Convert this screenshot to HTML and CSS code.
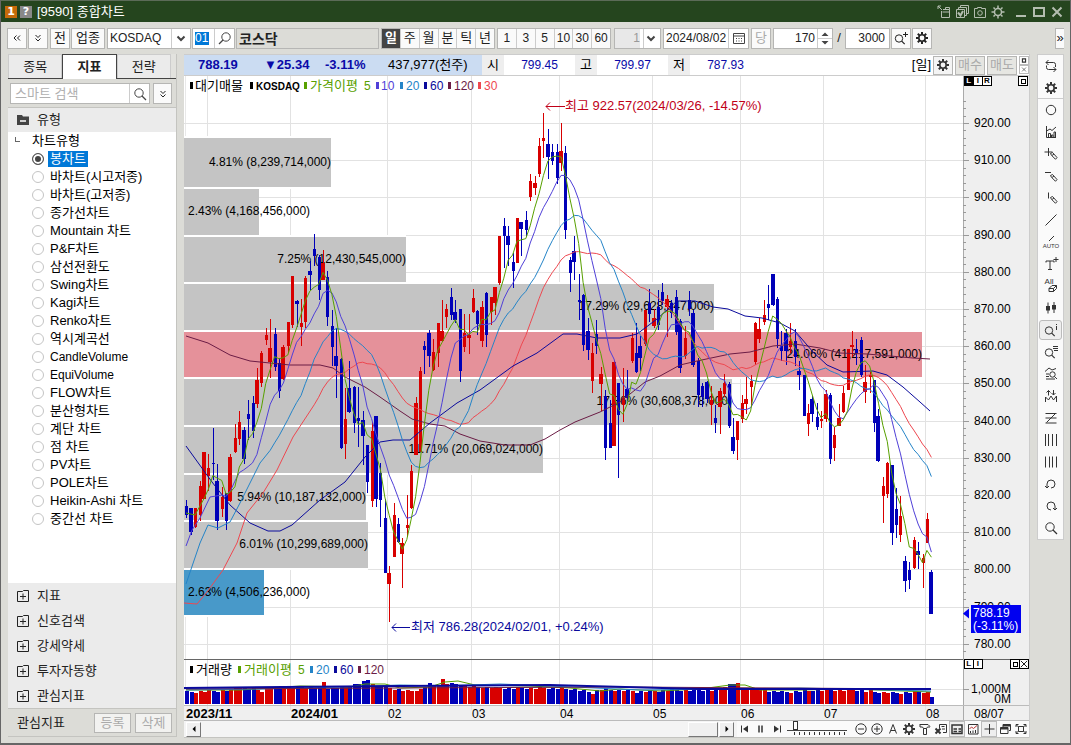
FILE: index.html
```html
<!DOCTYPE html>
<html lang="ko">
<head>
<meta charset="utf-8">
<title>[9590] 종합차트</title>
<link rel="stylesheet" href="styles.css">
</head>
<body>
<svg class="defs" aria-hidden="true">
  <symbol id="gear" viewBox="0 0 16 16"><circle cx="8" cy="8" r="3.2" fill="none" stroke="currentColor" stroke-width="1.600"/><path d="M8 2v2.500M8 11.500v2.500M2 8h2.500M11.500 8H14M3.800 3.800l1.600 1.600M10.600 10.600l1.600 1.600M12.200 3.800l-1.600 1.600M5.400 10.600l-1.600 1.600" fill="none" stroke="currentColor" stroke-width="2"/></symbol>
  <symbol id="lens" viewBox="0 0 16 16"><circle cx="7" cy="7" r="4.200" fill="none" stroke="currentColor"/><path d="M10 10l4 4" stroke="currentColor" stroke-width="1.300"/></symbol>
  <symbol id="chev" viewBox="0 0 16 16"><path d="M4.500 6.500L8 10l3.500-3.500" fill="none" stroke="currentColor" stroke-width="2"/></symbol>
  <symbol id="dbl" viewBox="0 0 16 16"><path d="M5.500 5L8 7.500 10.500 5M5.500 8.500L8 11l2.500-2.500" fill="none" stroke="currentColor"/></symbol>
  <symbol id="dblleft" viewBox="0 0 16 16"><path d="M7.500 5.500L5 8l2.500 2.500M11 5.500L8.500 8l2.500 2.500" fill="none" stroke="currentColor"/></symbol>
  <symbol id="plusbox" viewBox="0 0 16 16"><path d="M2.500 3.500h5l1 -1h5v11h-11z M8 5.500v6M5 8.500h6" fill="none" stroke="currentColor"/></symbol>
  <symbol id="pencil" viewBox="0 0 16 16"><path d="M7.500 7.500l2-1 4.500 5-1.500 1.800-4-4zM9 9.500l2-1.500" fill="none" stroke="currentColor"/></symbol>
  <symbol id="mag" viewBox="0 0 16 16"><circle cx="6" cy="8.500" r="3.700" fill="none" stroke="currentColor"/><path d="M8.700 11.200l3 3" stroke="currentColor" stroke-width="1.200"/></symbol>
</svg>
<div class="app">
  <header class="titlebar">
    <span class="badge one">1</span><span class="badge help">?</span>
    <h1>[9590] 종합차트</h1>
    <div class="wintools">
      <button aria-label="분리"><svg viewBox="0 0 16 16"><path d="M5.500 7v6.500h8V5.500H7M13.500 8h-7M9.500 5.500v-2h4v2M2 2l4 4M2 5V2h3" fill="none" stroke="currentColor"/></svg></button>
      <button aria-label="복사"><svg viewBox="0 0 16 16"><path d="M2.500 5.500h8v8h-8zM4.500 5V3.500h8v8H11M6.500 3V1.500h8v8H13" fill="none" stroke="currentColor"/><path d="M4 8.500l2.500 3L9 7" fill="none" stroke="currentColor" stroke-width="2"/></svg></button>
      <button aria-label="캡처"><svg viewBox="0 0 16 16"><path d="M2.500 4.500h3v-1h4v1h4v9h-11z" fill="none" stroke="currentColor"/><circle cx="8" cy="9" r="2.300" fill="none" stroke="currentColor"/></svg></button>
      <button aria-label="설정"><svg viewBox="0 0 16 16"><circle cx="8" cy="8" r="3.500" fill="none" stroke="currentColor" stroke-width="1.500"/><path d="M8 1.500V4M8 12v2.500M1.500 8H4M12 8h2.500M3.500 3.500L5 5M11 11l1.500 1.500M12.500 3.500L11 5M5 11l-1.500 1.500" stroke="currentColor" stroke-width="1.500"/></svg></button>
      <button aria-label="최소화"><svg viewBox="0 0 16 16"><path d="M3 12h10" stroke="currentColor" stroke-width="2"/></svg></button>
      <button aria-label="최대화"><svg viewBox="0 0 16 16"><path d="M3 4h10v8H3z" fill="none" stroke="currentColor" stroke-width="2"/></svg></button>
      <button aria-label="닫기"><svg viewBox="0 0 16 16"><path d="M3.500 3.500l9 9M12.500 3.500l-9 9" stroke="currentColor" stroke-width="2"/></svg></button>
    </div>
  </header>

  <div class="toolbar">
    <button class="tb" aria-label="이전"><svg><use href="#dblleft"/></svg></button>
    <button class="tb" aria-label="펼치기"><svg><use href="#dbl"/></svg></button>
    <button class="tb sep">전</button>
    <button class="tb sector">업종</button>
    <div class="combo market"><select aria-label="시장"><option>KOSDAQ</option></select><svg><use href="#chev"/></svg></div>
    <div class="field code"><input aria-label="코드" value="01"><button aria-label="찾기"><svg class="flip"><use href="#lens"/></svg></button></div>
    <div class="stockname">코스닥</div>
    <div class="seg sep"><button class="on">일</button><button>주</button><button>월</button><button>분</button><button>틱</button><button>년</button></div>
    <div class="seg"><button>1</button><button>3</button><button>5</button><button>10</button><button>30</button><button>60</button></div>
    <div class="combo unit sep"><select aria-label="주기" disabled><option>1</option></select><svg><use href="#chev"/></svg></div>
    <div class="field date"><input aria-label="날짜" value="2024/08/02"><button aria-label="달력"><svg viewBox="0 0 16 16"><path d="M2.500 3.500h11v10h-11zM2.500 6h11" fill="none" stroke="currentColor"/><path d="M5 8.500h7M5 11h7" stroke="currentColor" stroke-dasharray="1 1.500"/></svg></button></div>
    <button class="tb off sep">당</button>
    <div class="field count"><input aria-label="표시 개수" value="170"><button aria-label="증감"><svg viewBox="0 0 14 18"><path d="M3.500 7L7 3.500 10.500 7zM3.500 12L7 15.500l3.500-3.500z" fill="currentColor"/><path d="M0 9.500h14" stroke="#ccc"/></svg></button></div>
    <span class="slash">/</span>
    <div class="field total"><input aria-label="전체 개수" value="3000"></div>
    <button class="tb" aria-label="추가 조회"><svg viewBox="0 0 16 16"><use href="#mag"/><path d="M12.500 2v5M10 4.500h5" stroke="currentColor"/></svg></button>
    <button class="tb" aria-label="설정"><svg><use href="#gear"/></svg></button>
    <button class="tb more">»</button>
  </div>

  <main class="content">
    <aside class="side">
      <div class="tabs"><button>종목</button><button class="on">지표</button><button>전략</button></div>
      <div class="search"><div class="field"><input aria-label="검색" placeholder="스마트 검색"><button aria-label="검색"><svg><use href="#lens"/></svg></button></div><button class="tb" aria-label="펼치기"><svg><use href="#dbl"/></svg></button></div>
      <h2 class="group"><svg viewBox="0 0 16 16"><path d="M2 3h5l1 1.500h6V13H2z" fill="#444"/><path d="M5 9h6" stroke="#fff" stroke-width="1.500"/></svg>유형</h2>
      <div class="tree">
        <div class="root"><i></i>차트유형</div>
        <label><input type="radio" name="t" checked><span>봉차트</span></label>
        <label><input type="radio" name="t"><span>바차트(시고저종)</span></label>
        <label><input type="radio" name="t"><span>바차트(고저종)</span></label>
        <label><input type="radio" name="t"><span>종가선차트</span></label>
        <label><input type="radio" name="t"><span>Mountain 차트</span></label>
        <label><input type="radio" name="t"><span>P&amp;F차트</span></label>
        <label><input type="radio" name="t"><span>삼선전환도</span></label>
        <label><input type="radio" name="t"><span>Swing차트</span></label>
        <label><input type="radio" name="t"><span>Kagi차트</span></label>
        <label><input type="radio" name="t"><span>Renko차트</span></label>
        <label><input type="radio" name="t"><span>역시계곡선</span></label>
        <label class="latin"><input type="radio" name="t"><span>CandleVolume</span></label>
        <label class="latin"><input type="radio" name="t"><span>EquiVolume</span></label>
        <label><input type="radio" name="t"><span>FLOW차트</span></label>
        <label><input type="radio" name="t"><span>분산형차트</span></label>
        <label><input type="radio" name="t"><span>계단 차트</span></label>
        <label><input type="radio" name="t"><span>점 차트</span></label>
        <label><input type="radio" name="t"><span>PV차트</span></label>
        <label><input type="radio" name="t"><span>POLE차트</span></label>
        <label><input type="radio" name="t"><span>Heikin-Ashi 차트</span></label>
        <label><input type="radio" name="t"><span>중간선 차트</span></label>
      </div>
      <div class="cats">
        <button><svg><use href="#plusbox"/></svg>지표</button>
        <button><svg><use href="#plusbox"/></svg>신호검색</button>
        <button><svg><use href="#plusbox"/></svg>강세약세</button>
        <button><svg><use href="#plusbox"/></svg>투자자동향</button>
        <button><svg><use href="#plusbox"/></svg>관심지표</button>
      </div>
      <div class="sidefoot"><span>관심지표</span><button disabled>등록</button><button disabled>삭제</button></div>
    </aside>

    <section class="chart">
      <div class="quote">
        <div class="now"><b class="p">788.19</b><b class="d">▼25.34</b><b class="r">-3.11%</b><span>437,977(천주)</span></div>
        <span class="k">시</span><span class="v">799.45</span><span class="k">고</span><span class="v">799.97</span><span class="k">저</span><span class="v">787.93</span>
        <div class="acts"><span>[일]</span><button aria-label="설정"><svg><use href="#gear"/></svg></button><button class="w" disabled>매수</button><button class="w" disabled>매도</button>
        <div class="mini"><button aria-label="창"><svg viewBox="0 0 10 9"><path d="M3 2.500h4v4H3z" fill="none" stroke="#333" stroke-width="1.500"/></svg></button><button aria-label="닫기"><svg viewBox="0 0 10 9"><path d="M2.500 2l5 5M7.500 2l-5 5" stroke="#555"/></svg></button></div></div>
      </div>
      <div class="pane">
        <svg id="plot" viewBox="184 76 845 645" preserveAspectRatio="xMinYMin meet" role="img"></svg>
        <div class="marks top"><button class="inv">L</button><button>I</button><button>R</button></div>
        <div class="marks topend"><button aria-label="확대"><i></i></button></div>
        <div class="marks low"><button>L</button><button>I</button></div>
        <div class="marks lowend"><button aria-label="확대"><i></i></button><button aria-label="닫기"><svg viewBox="0 0 9 9"><path d="M1 1l7 7M8 1L1 8" stroke="#000"/></svg></button></div>
      </div>
      <div class="foot">
        <div class="scroll"><button aria-label="왼쪽"><svg viewBox="0 0 12 12"><path d="M7.500 3v6l-3-3z"/></svg></button><span class="thumb"></span><button aria-label="오른쪽"><svg viewBox="0 0 12 12"><path d="M4.500 3v6l3-3z"/></svg></button></div>
        <button class="ic" aria-label="처음"><svg viewBox="0 0 16 16"><path d="M4.500 4.500v7" stroke="currentColor"/><path d="M11 4.500v7L6 8z" fill="currentColor"/></svg></button>
        <button class="ic" aria-label="정지"><svg viewBox="0 0 16 16"><path d="M6 4.500v7M9 4.500v7" stroke="currentColor" stroke-width="1.500"/></svg></button>
        <button class="ic" aria-label="끝"><svg viewBox="0 0 16 16"><path d="M11.500 4.500v7" stroke="currentColor"/><path d="M5 4.500v7L10 8z" fill="currentColor"/></svg></button>
        <label class="speed"><input type="range" min="0" max="10" value="1" aria-label="속도"></label>
        <button class="ic" aria-label="축소"><svg viewBox="0 0 16 16"><circle cx="8" cy="8" r="5.200" fill="none" stroke="currentColor"/><path d="M5 8h6" stroke="currentColor"/></svg></button>
        <button class="ic" aria-label="확대"><svg viewBox="0 0 16 16"><circle cx="8" cy="8" r="5.200" fill="none" stroke="currentColor"/><path d="M5 8h6M8 5v6" stroke="currentColor"/></svg></button>
        <button class="ic" aria-label="글꼴"><svg viewBox="0 0 16 16"><path d="M4.500 12.500L8 3.500l3.500 9M6 9.500h4" fill="none" stroke="currentColor"/></svg></button>
        <button class="ic" aria-label="설정"><svg><use href="#gear"/></svg></button>
        <button class="ic" aria-label="도구"><svg viewBox="0 0 16 16"><path d="M3 3.500h8l2 2M3 3v3h2.500l1 1.500h3l1-1.500H13M6.500 7.500v6h3v-6" fill="none" stroke="currentColor"/></svg></button>
        <button class="ic" aria-label="내보내기"><svg viewBox="0 0 16 16"><path d="M6.500 7V3.500h7v8H10M8.500 5.500h3M9 8h3" fill="none" stroke="currentColor"/><path d="M2.500 7.500l5 5M7.500 7.500l-5 5" stroke="currentColor" stroke-width="2"/></svg></button>
        <button class="ic on" aria-label="표"><svg viewBox="0 0 16 16"><path d="M3 4h10v8.500H3z" fill="none" stroke="currentColor" stroke-width="1.500"/><path d="M4.500 8H8M4.500 10.500H8M9.500 8H12M9.500 10.500H12" stroke="currentColor" stroke-width="1.500"/></svg></button>
        <button class="ic" aria-label="차트"><svg viewBox="0 0 16 16"><path d="M3.500 3.500h9.500v9.500H3.500z" fill="none" stroke="currentColor"/><path d="M4.500 8l2-2 2 1.500L12 4.500" fill="none" stroke="#b33"/><path d="M5.500 12v-2M8 12V9.500M10.500 12V9" stroke="currentColor"/></svg></button>
        <button class="ic on" aria-label="십자선"><svg viewBox="0 0 16 16"><path d="M8.500 3v10M3.500 8h10" stroke="currentColor"/></svg></button>
        <button class="ic" aria-label="창"><svg viewBox="0 0 16 16"><path d="M3.500 6.500h7.500v6H3.500zM6 6V3.500h7.500v6H12" fill="none" stroke="currentColor"/><path d="M3.500 7.500H11M6 4.500h7.500" stroke="currentColor" stroke-width="2"/></svg></button>
        <button class="ic" aria-label="전체화면"><svg viewBox="0 0 16 16"><path d="M5.500 5.500h5v5h-5zM3 6V3.500h2.500M10.500 3.500H13V6M13 10v2.500h-2.500M5.500 12.500H3V10M3.500 4l2 2M12.500 4l-2 2M3.500 12l2-2M12.500 12l-2-2" fill="none" stroke="currentColor"/></svg></button>
      </div>
    </section>

    <nav class="rail">
      <button aria-label="새로고침"><svg viewBox="0 0 16 16"><path d="M5.500 2L3 4.500h7.500q2 0 2 2V9M3 4.500L5.500 7M3.500 7.500v2q0 2 2 2H13M10.500 9l2.500 2.500-2.500 2.500" fill="none" stroke="currentColor"/></svg></button>
      <button class="line" aria-label="설정"><svg><use href="#gear"/></svg></button>
      <button aria-label="원"><svg viewBox="0 0 16 16"><circle cx="8" cy="8" r="4.700" fill="none" stroke="currentColor"/></svg></button>
      <button aria-label="지표"><svg viewBox="0 0 16 16"><path d="M3.500 2v11.500H13M3.500 7l3.500-2 2 1.500L13 3M5.500 13V9.500h2V13M8.500 13v-2h1.500v2M11 13V8h1.500v5" fill="none" stroke="currentColor"/></svg></button>
      <button aria-label="십자 그리기"><svg viewBox="0 0 16 16"><path d="M5.500 2v8M1.500 6h8" stroke="currentColor"/><use href="#pencil"/></svg></button>
      <button aria-label="수평선"><svg viewBox="0 0 16 16"><path d="M2 4.500h6" stroke="currentColor"/><use href="#pencil"/></svg></button>
      <button aria-label="수직선"><svg viewBox="0 0 16 16"><path d="M5.500 2.500v6" stroke="currentColor"/><use href="#pencil"/></svg></button>
      <button aria-label="추세선"><svg viewBox="0 0 16 16"><path d="M2.500 13.500l11-11" stroke="currentColor"/></svg></button>
      <button aria-label="자동 추세선"><svg viewBox="0 0 16 16"><path d="M6 7l5-5" stroke="currentColor"/><text x="8" y="14" class="auto">AUTO</text></svg></button>
      <button aria-label="문자"><svg viewBox="0 0 16 16"><path d="M3 6.500V5h8v1.500M7 5v8M5 13.500h4M13 1v5M10.500 3.500h5" fill="none" stroke="currentColor"/></svg></button>
      <button aria-label="전체 지우기"><svg viewBox="0 0 16 16"><text x="6" y="6" class="auto all">All</text><path d="M6 10.500l3-3h4.500v3l-3 3H6zM6 10.500h4.500v3M10.500 10.500l3-3" fill="none" stroke="currentColor"/></svg></button>
      <button aria-label="봉"><svg viewBox="0 0 16 16"><path d="M5 2.500v11M11 2v11" stroke="currentColor"/><path d="M3 6h4v4.500H3zM9 5h4v4.500H9z" fill="currentColor"/></svg></button>
      <button class="on" aria-label="정보 조회"><svg viewBox="0 0 16 16"><use href="#mag"/><path d="M13.500 2v1M13.500 4v4" stroke="currentColor"/></svg></button>
      <button aria-label="목록 조회"><svg viewBox="0 0 16 16"><use href="#mag"/><path d="M10 2.500h5M10 4.500h5M11 6.500h4" stroke="currentColor"/></svg></button>
      <button aria-label="차트 조회"><svg viewBox="0 0 16 16"><path d="M2 5.500l4-3.500 3 2 4-1.500M3 8h3M3 10.500h3M3 13h9" fill="none" stroke="currentColor"/><circle cx="9.500" cy="8.500" r="2.700" fill="none" stroke="currentColor"/><path d="M11.500 10.500l2.500 2.500" stroke="currentColor"/></svg></button>
      <button aria-label="파동"><svg viewBox="0 0 16 16"><path d="M2.500 14V9l3 3 2.500-4 2.500 4 3-4v6M5.500 7.500V2.500M3.500 4.500l2-2 2 2M10.500 2v5M8.500 5l2 2 2-2" fill="none" stroke="currentColor"/></svg></button>
      <button aria-label="채널"><svg viewBox="0 0 16 16"><path d="M2.500 3.500h11M2.500 8h11M2.500 13h11M3.500 12.500l9-9" stroke="currentColor"/></svg></button>
      <button aria-label="시간대"><svg viewBox="0 0 16 16"><path d="M2.500 2v12M5.500 2v12M9.500 2v12M13.500 2v12" stroke="currentColor"/></svg></button>
      <button aria-label="주기선"><svg viewBox="0 0 16 16"><path d="M2.500 2.500v11M6.500 2.500v11M9.500 2.500v11M13.500 2.500v11" stroke="currentColor"/></svg></button>
      <button aria-label="되돌리기"><svg viewBox="0 0 16 16"><path d="M8 12a4 4 0 1 0-4-4v4M2 10l2 2 2-2" fill="none" stroke="currentColor"/></svg></button>
      <button aria-label="다시하기"><svg viewBox="0 0 16 16"><path d="M8 12a4 4 0 1 1 4-4v4M10 10l2 2 2-2" fill="none" stroke="currentColor"/></svg></button>
      <button aria-label="돋보기"><svg><use href="#lens"/></svg></button>
    </nav>
  </main>
</div>
<script src="chart.js"></script>
</body>
</html>
```

FILE: styles.css
```css
* { box-sizing: border-box; }
body { margin: 0; font: 13px/16px "Liberation Sans", "Noto Sans CJK KR", sans-serif; color: #222; }
button, input, select { font: inherit; color: inherit; margin: 0; padding: 0; border: 0; background: none; border-radius: 0; }
svg { display: block; width: 16px; height: 16px; flex: none; }
.defs { position: absolute; width: 0; height: 0; }
.app { display: flex; flex-direction: column; min-height: 100vh; background: #dcdcd7; border: 1px solid #666; border-top-color: #5c6b58; border-bottom-width: 2px; }

.titlebar { display: flex; align-items: center; height: 21px; padding: 0 5px 0 4px; background: #25451e; color: #fff; }
.titlebar h1 { margin: 0 0 0 2px; font-size: 13px; font-weight: 400; }
.badge { width: 12px; height: 12px; margin-right: 3px; font: bold 11px/12px "DejaVu Sans", sans-serif; text-align: center; }
.one { background: #c66a0a; }
.help { background: #888; }
.wintools { display: flex; gap: 2px; margin-left: auto; color: #b4bdb0; }
.wintools button:nth-child(5) { margin-left: 5px; }

.toolbar { display: flex; align-items: center; gap: 1px; height: 32px; padding: 0 6px; }
.tb, .field, .combo, .seg { height: 21px; border: 1px solid #b6b6b4; background: #fafafa; display: flex; align-items: center; justify-content: center; flex: none; }
.tb { width: 20px; }
.sep { margin-left: 1px; }
.sector { width: 34px; margin-right: 1px; }
.off { color: #aaa; margin-left: 1px; }
.combo { background: #fff; position: relative; }
.combo select { appearance: none; flex: 1; width: 100%; min-width: 0; height: 19px; padding: 0 2px; font-size: 12px; }
.combo svg { position: absolute; right: 1px; pointer-events: none; color: #444; }
.market { width: 84px; }
.market::after, .unit::after { content: ""; position: absolute; right: 18px; top: 0; bottom: 0; border-left: 1px solid #ccc; }
.unit { width: 47px; }
.unit::after { right: 16px; }
.unit select { background: #e8e8e8; color: #999; padding-right: 20px; text-align: right; text-align-last: right; opacity: 1; background-clip: content-box; padding-left: 0; }
.field { background: #fff; }
.field input { flex: 1; min-width: 0; width: 100%; height: 19px; padding: 0 2px; outline: 0; font-size: 12px; }
.field button { display: flex; align-items: center; justify-content: center; width: 20px; height: 19px; border-left: 1px solid #ccc; color: #444; flex: none; }
.code { width: 43px; }
.code input { flex: none; width: 14px; height: 13px; margin: 0 5px 0 2px; padding: 0; background: #0078d7; color: #fff; }
.flip { transform: scaleX(-1); }
.stockname { flex: none; width: 143px; height: 21px; padding-left: 2px; border: 1px solid #b6b6b4; font: bold 14px/19px "Noto Sans CJK KR", sans-serif; }
.seg button { width: 19px; height: 19px; border-left: 1px solid #ccc; }
.seg button:first-child { width: 18px; border-left: 0; }
.seg { width: 114px; margin-right: 1px; }
.seg .on { background: #444; color: #fff; font-weight: 700; }
.seg + .seg button { font-size: 12px; }
.date { width: 86px; margin-left: 1px; }
.count { width: 60px; margin-left: 1px; }
.count input, .total input { text-align: right; }
.count button { width: 15px; }
.count svg { width: 14px; height: 18px; }
.total { width: 45px; }
.total input { padding-right: 4px; }
.slash { width: 10px; text-align: center; flex: none; }
.more { margin-left: auto; width: 9px; border-right: 0; }

.content { flex: 1; display: flex; padding: 0 6px 6px 7px; min-height: 0; }

.side { width: 169px; flex: none; display: flex; flex-direction: column; border-right: 1px solid #c4c4c0; }
.tabs { display: flex; height: 25px; border-bottom: 1px solid #444; padding-right: 5px; background: #e2e2de; }
.tabs button { flex: 1; height: 24px; background: #ebebeb; border: 1px solid #ccc; border-bottom: 0; }
.tabs .on { background: #fff; border-color: #444; height: 25px; font-weight: 700; }
.search { display: flex; gap: 3px; padding: 4px 4px 4px 2px; height: 28px; }
.search .field { flex: 1; }
.search .tb { width: 19px; }
.search input::placeholder { color: #b0b0b0; }
.search input { font-size: 13px; padding-left: 4px; }
.group { display: flex; align-items: center; gap: 6px; height: 25px; margin: 0; padding-left: 7px; font-size: 13px; font-weight: 400; background: #ebebeb; border-top: 1px solid #c4c4c0; }
.tree { flex: 1; background: #fff; color: #000; }
.root, .tree label { display: flex; align-items: center; height: 18px; }
.tree label { padding-left: 24px; }
.tree label span { padding: 0 2px; margin-left: 4px; }
.tree .latin { font-size: 12px; }
.root i { width: 5px; height: 5px; margin: 0 12px 4px 7px; border: solid #666; border-width: 0 0 1px 1px; }
.tree input { appearance: none; width: 12px; height: 12px; border: 1px solid #c4c4c4; border-radius: 50%; flex: none; }
.tree input:checked { border-color: #555; background: #444; box-shadow: inset 0 0 0 2px #fff; }
.tree input:checked + span { background: #0078d7; color: #fff; }
.cats { background: #ebebeb; }
.cats button { display: flex; align-items: center; gap: 6px; width: 100%; height: 25px; padding-left: 7px; }
.sidefoot { display: flex; align-items: center; gap: 4px; height: 29px; padding: 0 4px 0 9px; border-top: 1px solid #c4c4c0; border-bottom: 1px solid #c4c4c0; }
.sidefoot span { margin-right: auto; }
.sidefoot button { width: 37px; height: 20px; border: 1px solid #b6b6b4; background: #f2f2f0; color: #aaa; }

.chart { flex: 1; min-width: 0; margin: 0 7px -1px; display: flex; flex-direction: column; border-right: 1px solid #ccc; }
.quote { display: flex; height: 22px; line-height: 20px; background: #fff; border: 1px solid #ccc; border-width: 1px 0; color: #000; }
.now { display: flex; width: 298px; padding-left: 14px; background: #cbdcf2; flex: none; }
.now b { color: #0a0aa8; }
.now .p { width: 66px; }
.now .d { width: 61px; }
.now .r { width: 63px; }
.k { width: 22px; text-align: center; background: #eee; flex: none; }
.v { width: 71px; text-align: center; color: #0a0aa8; font-size: 12px; flex: none; }
.acts { display: flex; gap: 2px; margin-left: auto; align-items: center; }
.acts > button { display: flex; align-items: center; justify-content: center; width: 20px; height: 19px; border: 1px solid #b6b6b4; background: #f4f4f4; color: #333; }
.acts .w { width: 30px; color: #aaa; background: #e6e6e2; }
.mini { display: flex; flex-direction: column; }
.mini button { width: 10px; height: 9px; border: 1px solid #bbb; }
.mini svg { width: 8px; height: 7px; }
.pane { flex: 1; position: relative; background: #fff; min-height: 0; }
#plot { width: 100%; height: auto; font-size: 12px; }
#plot .date { font-size: 13px; font-weight: 700; }
#plot .note { font-size: 13px; }
#plot .name { font-size: 10px; font-weight: 700; }
#plot .crisp { shape-rendering: crispEdges; }
.marks { position: absolute; display: flex; }
.marks button { display: flex; align-items: center; justify-content: center; width: 10px; height: 10px; margin-left: -1px; border: 1px solid #000; background: #fff; color: #000; font: bold 8px/8px "Liberation Sans", sans-serif; }
.marks .inv { background: #000; color: #fff; }
.marks i { width: 5px; height: 5px; border: 1px solid #000; }
.marks svg { width: 8px; height: 8px; }
.top { left: 92.400%; top: 0; }
.topend { right: 1px; top: 0; }
.low { left: 92.400%; top: 90.400%; }
.lowend { right: 0; top: 90.400%; }

.foot { display: flex; height: 17px; background: #fafafa; color: #333; border-bottom: 1px solid #c4c4c0; }
.scroll { flex: 1; display: flex; align-items: center; padding: 0 3px 0 2px; background: #f4f4f4; }
.scroll button, .thumb { width: 15px; height: 15px; background: #f0f0f0; border: 1px solid; border-color: #fff #777 #777 #fff; display: flex; align-items: center; justify-content: center; }
.scroll svg { width: 12px; height: 12px; }
.thumb { width: 30px; margin-left: auto; margin-right: 1px; }
.ic { width: 16px; height: 16px; flex: none; }
.ic.on { background: #eee; box-shadow: inset 0 0 0 1px #bbb; }
.speed { width: 68px; flex: none; padding: 0 2px; background: repeating-linear-gradient(90deg, #333 0 1px, transparent 1px 5px) 9px 11px / 52px 3px no-repeat; }
.speed input { appearance: none; width: 60px; height: 10px; display: block; border-bottom: 1px solid #444; }
.speed input::-webkit-slider-thumb { appearance: none; width: 5px; height: 9px; background: #fff; border: 1px solid #333; }

.rail { width: 27px; flex: none; align-self: flex-start; display: flex; flex-direction: column; background: #fafafa; border: 1px solid #ccc; color: #333; }
.rail button { display: flex; align-items: center; justify-content: center; height: 22px; }
.rail .line { border-bottom: 1px solid #ccc; }
.rail .on { height: 20px; margin: 1px; background: #eee; border: 1px solid #bbb; border-radius: 3px; }
.rail svg { overflow: visible; }
.auto { font: 6px "Liberation Sans", sans-serif; text-anchor: middle; fill: currentColor; }
.all { font-size: 8px; }
```

FILE: chart.js
```js
const NS = 'http://www.w3.org/2000/svg';
const plot = document.getElementById('plot');
function el(name, attrs, text) {
  const e = document.createElementNS(NS, name);
  for (const k in attrs) e.setAttribute(k, attrs[k]);
  if (text !== undefined) e.textContent = text;
  plot.appendChild(e);
  return e;
}
const rect = (x, y, w, h, fill) => el('rect', { x, y, width: w, height: h, fill, class: 'crisp' });
const line = (x1, y1, x2, y2, stroke) => el('path', { d: `M${x1} ${y1}L${x2} ${y2}`, stroke, fill: 'none', class: 'crisp' });
const label = (x, y, t, fill = '#000', extra = {}) => el('text', { x, y, fill, ...extra }, t);
const RED = '#d80000', BLUE = '#0000b8';

/* backgrounds and grid */
rect(184, 76, 779, 645, '#fff');
rect(963, 76, 67, 645, '#efefef');
rect(184, 705, 846, 16, '#efefef');
const months = [[207, ''], [290, ''], [387, '02'], [471, '03'], [559, '04'], [652, '05'], [740, '06'], [823, '07'], [925, '08']];
months.forEach(([x]) => line(x + .5, 76, x + .5, 710, '#e2e2e2'));
line(185.5, 76, 185.5, 704, '#e8e8e8');
for (let p = 920; p >= 780; p -= 10) {
  const y = Math.round(123 + (920 - p) * 3.72) + .5;
  line(184, y, 963, y, '#e2e2e2');
}

/* volume profile: top, bottom, right edge, label */
const profile = [
  [138, 187, 331, '4.81% (8,239,714,000)'], [189, 235, 259, '2.43% (4,168,456,000)'],
  [237, 282, 406, '7.25% (12,430,545,000)'], [284, 330, 714, '17.29% (29,628,947,000)'],
  [332, 377, 922, '24.06% (41,217,591,000)', '#e5919a'], [379, 425, 732, '17.86% (30,608,378,000)'],
  [427, 473, 543, '11.71% (20,069,024,000)'], [475, 520, 366, '5.94% (10,187,132,000)'],
  [522, 568, 368, '6.01% (10,299,689,000)'], [570, 615, 264, '2.63% (4,506,236,000)', '#4899c9']
];
profile.forEach(([t, b, r, , c]) => { rect(184, t - 2, r - 184, b - t + 4, '#fff'); rect(184, t, r - 184, b - t, c || '#c4c4c4'); });
profile.forEach(([t, b, r, s]) => {
  const y = Math.round((t + b) / 2) + 3;
  if (r < 314) label(188, y, s); else label(r, y, s, '#000', { 'text-anchor': 'end' });
});

/* candles: direction, body top, body bottom, high, low */
const raw = `b506,515,500,518 b508,532,508,535 r508,527,508,528 r486,515,481,521 r452,499,452,499 r468,476,454,491 b463,464,428,480 b481,521,464,530 r497,509,487,517 b493,521,493,530
r457,501,454,502 r438,452,424,453 r422,439,411,445 b430,459,427,464 b414,419,400,440 b403,431,396,438 r380,404,368,408 r353,383,351,387 r335,340,328,345 r348,362,319,378
b334,367,328,371 b363,391,358,398 r347,379,345,380 r322,346,322,353 r276,325,276,328 b301,304,300,327 r323,327,299,346 r278,322,276,328 b271,275,261,290 b249,256,234,266
b257,290,255,300 r263,280,250,280 b277,317,271,326 b326,347,310,366 b356,366,328,398 b359,448,358,449 r419,444,388,459 b388,412,361,413 b387,423,386,433 b418,421,387,447
b420,436,411,465 b445,482,445,493 r431,501,422,507 b416,499,416,507 b473,500,463,527 b518,573,499,573 r573,584,566,622 r515,557,503,557 b524,542,518,543 r543,554,538,588
r525,528,495,537 r471,508,465,509 r403,455,397,455 r371,452,367,452 b346,350,341,374 b333,356,330,367 r352,370,339,371 r323,353,323,367 r331,341,300,342 r309,317,304,328
b297,315,288,320 b312,320,300,323 b309,371,309,382 r333,347,314,352 r335,338,314,354 r298,312,289,313 b311,324,310,335 r307,341,301,347 b293,335,292,347 r297,312,297,325
r287,303,287,315 r236,283,236,285 b226,236,218,268 b236,245,226,266 b262,271,253,288 r218,263,218,263 b222,229,222,256 b220,230,211,236 r181,197,174,201 r183,188,176,195
r146,174,138,177 r138,141,113,158 b144,157,129,179 b152,161,144,165 b152,178,144,184 r151,163,123,171 b153,230,146,239 b260,273,257,292 b251,262,236,280 b300,302,274,320
b295,345,294,351 b331,350,318,360 r353,381,343,393 b334,346,320,354 r374,384,367,411 b396,448,390,460 b423,448,400,448 r362,446,361,446 b383,415,383,478 r398,405,368,422
b389,398,370,401 r338,361,333,363 b353,372,323,373 b346,358,336,371 r310,344,310,346 b303,314,289,322 r318,326,309,328 b307,325,290,330 b292,301,283,305 r299,307,295,337
b303,313,300,318 b297,332,290,335 b321,368,319,373 r338,356,326,359 b300,309,291,316 b313,365,310,367 b361,395,358,407 b386,397,383,407 b382,399,381,403 r400,405,386,425
b418,423,405,433 r391,407,388,434 r383,394,374,397 b384,426,382,428 b437,451,418,454 r421,440,421,460 r403,419,395,423 r399,404,377,414 r381,387,375,407 r323,362,322,365
r329,339,318,343 r315,322,300,325 b304,308,285,320 b274,305,274,306 b299,339,297,348 b346,351,331,361 b333,351,329,365 r341,347,323,353 b341,357,329,366 b371,375,361,390
b375,416,375,416 r413,424,404,436 b399,414,396,422 b417,427,403,430 r419,421,411,428 r394,419,390,422 b395,459,393,464 r435,448,427,461 r418,426,404,426 r393,412,386,413
r349,390,349,390 r345,347,331,357 b349,353,339,365 b340,375,337,377 r382,392,365,403 r375,377,372,393 b380,423,380,432 b416,461,409,462 r486,496,477,523 r463,494,462,498
b465,533,465,545 b509,525,488,538 r516,535,496,542 b561,581,556,592 b570,580,562,589 r540,568,537,569 b551,555,542,569 r558,563,554,588 r519,543,513,543 b572,614,570,614`;
const candles = raw.split(/\s+/).map(s => {
  const [t, b, h, l] = s.slice(1).split(',').map(Number);
  return { up: s[0] === 'r', t, b, h, l };
});
const xs = i => 186.4 + i * 4.408;
candles.forEach((c, i) => {
  const x = Math.round(xs(i)), color = c.up ? RED : BLUE, wide = i % 3 === 1;
  rect(x, c.h, 1, c.l - c.h, color);
  rect(wide ? x - 2 : x - 1, c.t, wide ? 4 : 3, Math.max(1, c.b - c.t), color);
});

/* moving averages */
const poly = (pts, stroke) => el('polyline', { points: pts.map(p => p.join(',')).join(' '), stroke, fill: 'none' });
function average(n, lead, stroke) {
  const close = candles.map(c => c.up ? c.t : c.b), pts = [...lead];
  for (let i = n - 1; i < close.length; i++) {
    let s = 0;
    for (let k = 0; k < n; k++) s += close[i - k];
    pts.push([xs(i).toFixed(1), (s / n).toFixed(1)]);
  }
  poly(pts, stroke);
}
poly([[186,336],[208,343],[230,355],[250,361],[270,363],[290,365],[320,365],[333,368],[345,377],[365,387],[380,397],[400,411],[412,419],[430,424],[445,426],[460,434],[480,441],[505,445],[530,445],[545,439],[560,430],[575,422],[600,412],[620,402],[645,382],[660,376],[680,365],[697,361],[730,354],[750,352],[773,346],[795,344],[820,348],[840,353],[867,354],[913,358],[930,359]], '#6b1c45');
average(30, [[184,603],[197,604],[207,592],[223,570],[237,543],[247,513],[263,493],[277,470],[293,437]], '#ee4850');
poly([[186,446],[212,482],[230,505],[250,523],[268,531],[280,531],[292,525],[320,500],[345,482],[365,457],[380,442],[393,440],[410,440],[430,423],[457,403],[480,390],[513,366],[537,353],[563,334],[577,334],[597,338],[620,338],[637,334],[657,319],[677,301],[695,301],[713,307],[728,309],[745,316],[762,318],[780,323],[795,331],[813,352],[827,365],[843,372],[873,371],[887,375],[903,387],[920,402],[930,411]], '#0a0a9c');
average(20, [[186,584],[200,543],[208,525],[218,528],[230,522],[240,503],[260,463]], '#2484c8');
average(10, [[186,546],[192,530],[200,518],[210,497],[222,495]], '#5040d8');
average(5, [[186,513],[195,515]], '#58a000');

/* high and low notes */
el('path', { d: 'M565 106.500H546M550 102.500l-4 4 4 4', stroke: '#c00018', fill: 'none' });
label(565, 110, '최고 922.57(2024/03/26, -14.57%)', '#c00018', { class: 'note' });
el('path', { d: 'M410 627.500H392M396 623.500l-4 4 4 4', stroke: '#0a0a9c', fill: 'none' });
label(411, 631, '최저 786.28(2024/02/01, +0.24%)', '#0a0a9c', { class: 'note' });

/* volume pane */
line(184, 659.5, 1030, 659.5, '#666');
line(184, 689.5, 963, 689.5, '#e2e2e2');
const vol = [[186,692],[210,691],[230,690],[238,685],[245,688],[262,691],[272,688],[300,687],[320,687],[323,682],[328,689],[345,686],[360,683],[367,680],[375,686],[390,688],[407,691],[420,690],[428,684],[438,685],[441,678],[446,683],[455,684],[470,687],[500,688],[550,688],[570,689],[591,693],[600,689],[640,692],[670,690],[715,690],[724,686],[736,683],[742,688],[760,690],[785,692],[820,690],[850,690],[890,693],[927,692],[932,697]];
const at = (pts, x) => {
  const k = Math.max(1, pts.findIndex(p => p[0] >= x));
  const [a, b] = [pts[k - 1], pts[k]];
  return a[1] + (b[1] - a[1]) * (x - a[0]) / (b[0] - a[0]);
};
candles.forEach((c, i) => {
  const y = Math.round(at(vol, Math.max(187, xs(i))) + (i * 7 % 5) * .5 - 1);
  rect(Math.round(xs(i)) - 1, y, 4, 704 - y, c.up ? RED : BLUE);
});
poly([[186,690],[240,690],[300,686],[350,687],[365,684],[385,684],[400,688],[430,687],[445,682],[458,681],[475,685],[530,686],[570,688],[600,691],[620,689],[660,691],[700,689],[730,685],[745,685],[760,690],[800,690],[850,689],[931,692]], '#58a000');
poly([[186,690],[260,689],[340,687],[400,685],[440,686],[500,684],[550,686],[640,690],[720,689],[800,688],[931,691]], '#2484c8');
poly([[186,689],[400,688],[625,687],[931,689]], '#6b1c45');
el('polyline', { points: '184,688 400,686 550,685 625,687 700,689 931,689', stroke: '#0a0a9c', 'stroke-width': 2, fill: 'none' });

/* price and time axes */
line(963.5, 76, 963.5, 721, '#aaa');
line(184, 705.5, 1030, 705.5, '#bbb');
line(184, 720.5, 1030, 720.5, '#bbb');
for (let p = 926; p >= 778; p -= 2) {
  const y = Math.round(123 + (920 - p) * 3.72) + .5;
  line(963, y, p % 10 ? 966 : 969, y, '#999');
}
for (let p = 920; p >= 780; p -= 10) label(974, Math.round(127 + (920 - p) * 3.72), p + '.00');
line(963, 689.5, 969, 689.5, '#999');
label(1011, 693, '1,000M', '#000', { 'text-anchor': 'end' });
label(1011, 703, '0M', '#000', { 'text-anchor': 'end' });
rect(971, 605, 50, 28, '#0000f0');
el('path', { d: 'M963 613.500l6-5v10z', fill: '#0000f0' });
label(973, 617, '788.19', '#fff');
label(973, 630, '(-3.11%)', '#fff');
label(186, 718, '2023/11', '#000', { class: 'date' });
label(291, 718, '2024/01', '#000', { class: 'date' });
months.forEach(([x, t]) => t && label(x + 1, 718, t));
label(974, 718, '08/07');

/* legends: marker x, text x, text, colour */
const legend = (y, items) => items.forEach(([m, x, t, c, cls]) => {
  rect(m, y - 8, 3, 7, c);
  label(x, y, t, c, cls ? { class: cls } : {});
});
legend(90, [[190,195,'대기매물','#000','note'],[250,256,'KOSDAQ','#000','name'],[304,310,'가격이평','#58a000','note'],[376,381,'10','#5040d8'],[400,406,'20','#2484c8'],[424,430,'60','#0a0a9c'],[448,454,'120','#6b1c45'],[478,484,'30','#ee4850']]);
label(364, 90, '5', '#58a000');
legend(674, [[190,196,'거래량','#000','note'],[238,244,'거래이평','#58a000','note'],[310,316,'20','#2484c8'],[334,340,'60','#0a0a9c'],[358,364,'120','#6b1c45']]);
label(298, 674, '5', '#58a000');
```
